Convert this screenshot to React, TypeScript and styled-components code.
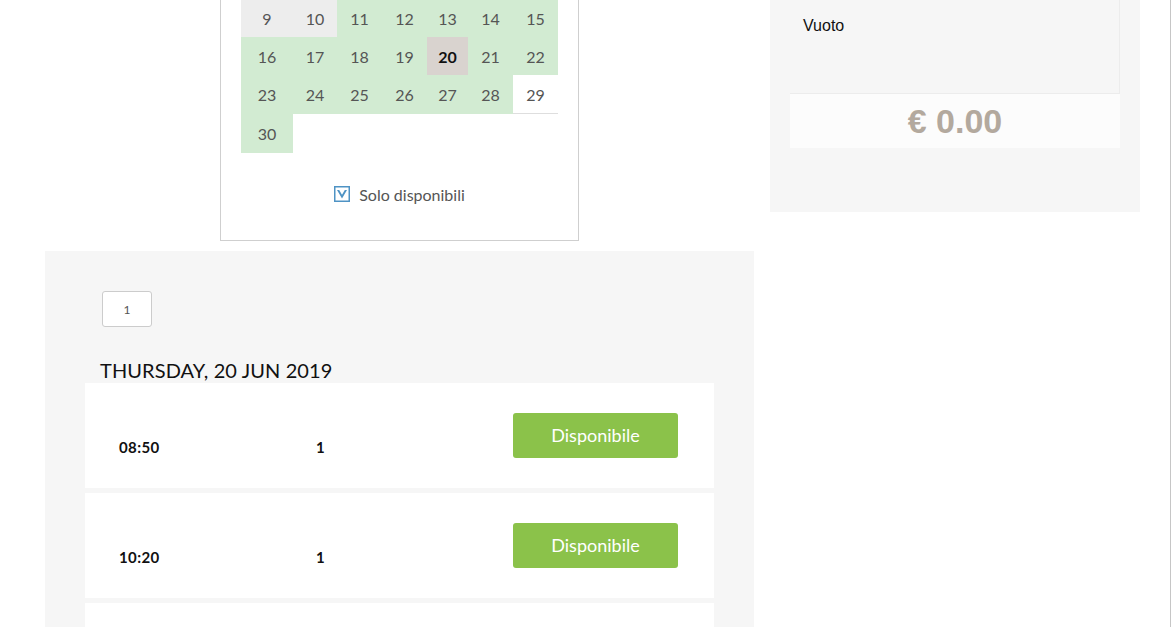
import React from "react";
import styled, { createGlobalStyle } from "styled-components";

const Global = createGlobalStyle`
  html, body { margin: 0; padding: 0; background: #fff; }
  body { font-family: "Lato", "Open Sans", sans-serif; }
`;

const Page = styled.div`
  box-sizing: border-box;
  width: 1171px;
  height: 627px;
  overflow: hidden;
  border-right: 1px solid #c6c6c6;
  display: flex;
  align-items: flex-start;
  padding-left: 45px;
  gap: 16px;
`;

const LeftCol = styled.div`
  width: 709px;
  display: flex;
  flex-direction: column;
  gap: 10px;
`;

const CalendarBox = styled.div`
  box-sizing: border-box;
  width: 359px;
  margin: 0 auto;
  border: 1px solid #cfcfcf;
  border-top: none;
  padding: 0 20px 35px 20px;
`;

const Grid = styled.div`
  display: grid;
  grid-template-columns: 52px 44px 45px 45px 41px 45px 45px;
  grid-template-rows: 37px 38px 39px 39px;
`;

type Kind = "past" | "free" | "today" | "plain";

const Cell = styled.div<{ $kind: Kind }>`
  box-sizing: border-box;
  display: flex;
  align-items: center;
  justify-content: center;
  font-size: 16px;
  color: ${(p) => (p.$kind === "today" ? "#111" : "#555")};
  font-weight: ${(p) => (p.$kind === "today" ? 700 : 400)};
  background: ${(p) =>
    p.$kind === "past"
      ? "#ededed"
      : p.$kind === "free"
      ? "#d2ebd2"
      : p.$kind === "today"
      ? "#d9d3cf"
      : "transparent"};
  border-bottom: ${(p) => (p.$kind === "plain" ? "1px solid #dedede" : "none")};
`;

const CheckRow = styled.label`
  display: flex;
  align-items: center;
  justify-content: center;
  gap: 9px;
  margin-top: 30px;
  height: 22px;
  font-size: 16px;
  color: #555;
  font-weight: 400;
`;

const Panel = styled.div`
  background: #f6f6f6;
  padding: 40px 40px 0 40px;
  min-height: 400px;
`;

const QtyInput = styled.div`
  box-sizing: border-box;
  width: 50px;
  height: 36px;
  margin-left: 17px;
  background: #fff;
  border: 1px solid #cccccc;
  border-radius: 3px;
  display: flex;
  align-items: center;
  justify-content: center;
  font-size: 12px;
  color: #555;
`;

const DayTitle = styled.h2`
  margin: 30px 0 0 15px;
  font-size: 20px;
  line-height: 26px;
  font-weight: 400;
  color: #111;
  text-transform: uppercase;
  letter-spacing: 0.1px;
`;

const SlotList = styled.div`
  display: flex;
  flex-direction: column;
  gap: 5px;
`;

const Slot = styled.div`
  background: #fff;
  height: 105px;
  display: grid;
  grid-template-columns: 197px 1fr 165px;
  padding: 0 36px 0 34px;
`;

const SlotText = styled.div`
  padding-top: 56px;
  font-size: 15px;
  line-height: 16px;
  font-weight: 700;
  letter-spacing: 0.4px;
  color: #111;
`;

const BookButton = styled.button`
  margin-top: 30px;
  height: 45px;
  width: 165px;
  border: none;
  border-radius: 3px;
  background: #8bc24a;
  color: #fff;
  font-family: "Lato", "Open Sans", sans-serif;
  font-size: 18px;
  font-weight: 400;
  padding: 0 0 2px 0;
`;

const RightCol = styled.div`
  box-sizing: border-box;
  width: 370px;
  height: 212px;
  background: #f6f6f6;
  padding: 0 20px;
`;

const Cart = styled.div`
  box-sizing: border-box;
  height: 94px;
  border-right: 1px solid #ececec;
  border-bottom: 1px solid #ececec;
  padding: 17px 13px 0 13px;
  font-family: "Liberation Sans", Arial, sans-serif;
  font-size: 16px;
  color: #111;
`;

const Total = styled.div`
  height: 54px;
  background: #fcfcfc;
  display: flex;
  align-items: center;
  justify-content: center;
  font-family: "Liberation Sans", Arial, sans-serif;
  font-weight: 700;
  font-size: 34px;
  color: #b3a99e;
`;

const CheckIcon = () => (
  <svg width="16" height="16" viewBox="0 0 16 16">
    <rect x="0.75" y="0.75" width="14.5" height="14.5" fill="#fff" stroke="#4f93c4" strokeWidth="1.5" />
    <path d="M3 4 L8 12.5 L13 4 L10.8 4 L8 8.8 L5.2 4 Z" fill="#4f93c4" />
  </svg>
);

const rows: { n: number; k: Kind }[][] = [
  [
    { n: 9, k: "past" },
    { n: 10, k: "past" },
    { n: 11, k: "free" },
    { n: 12, k: "free" },
    { n: 13, k: "free" },
    { n: 14, k: "free" },
    { n: 15, k: "free" },
  ],
  [
    { n: 16, k: "free" },
    { n: 17, k: "free" },
    { n: 18, k: "free" },
    { n: 19, k: "free" },
    { n: 20, k: "today" },
    { n: 21, k: "free" },
    { n: 22, k: "free" },
  ],
  [
    { n: 23, k: "free" },
    { n: 24, k: "free" },
    { n: 25, k: "free" },
    { n: 26, k: "free" },
    { n: 27, k: "free" },
    { n: 28, k: "free" },
    { n: 29, k: "plain" },
  ],
  [{ n: 30, k: "free" }],
];

const slots = [
  { time: "08:50", count: 1 },
  { time: "10:20", count: 1 },
];

export default function App() {
  return (
    <>
      <Global />
      <Page>
        <LeftCol>
          <CalendarBox>
            <Grid>
              {rows.flat().map((c) => (
                <Cell key={c.n} $kind={c.k}>
                  {c.n}
                </Cell>
              ))}
            </Grid>
            <CheckRow>
              <CheckIcon />
              Solo disponibili
            </CheckRow>
          </CalendarBox>
          <Panel>
            <QtyInput>1</QtyInput>
            <DayTitle>Thursday, 20 Jun 2019</DayTitle>
            <SlotList>
              {slots.map((s) => (
                <Slot key={s.time}>
                  <SlotText>{s.time}</SlotText>
                  <SlotText>{s.count}</SlotText>
                  <div>
                    <BookButton>Disponibile</BookButton>
                  </div>
                </Slot>
              ))}
              <Slot />
            </SlotList>
          </Panel>
        </LeftCol>
        <RightCol>
          <Cart>Vuoto</Cart>
          <Total>€ 0.00</Total>
        </RightCol>
      </Page>
    </>
  );
}
